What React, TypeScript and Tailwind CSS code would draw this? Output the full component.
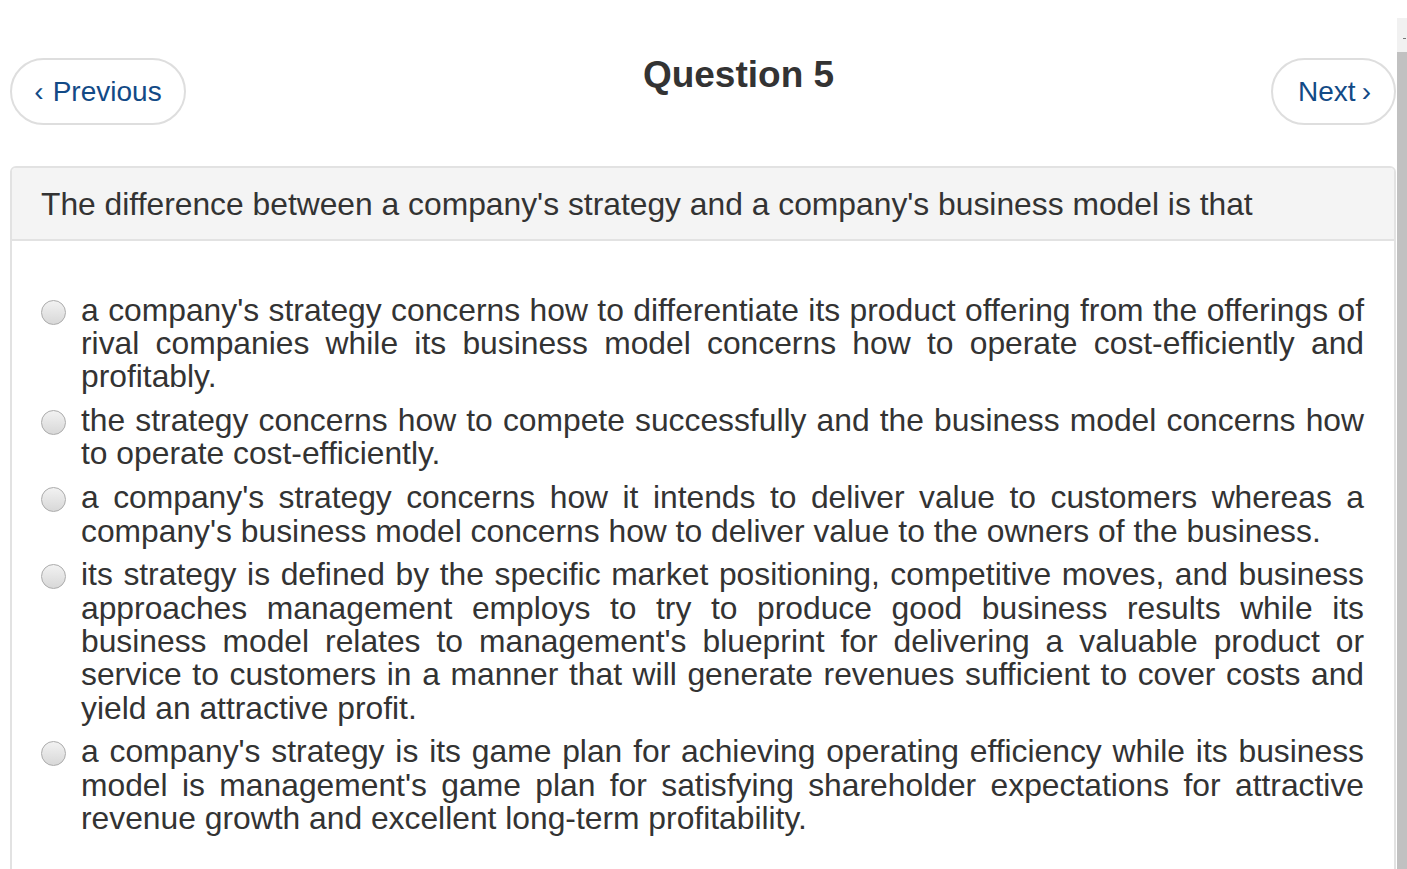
import React from 'react';

const options = [
  "a company's strategy concerns how to differentiate its product offering from the offerings of rival companies while its business model concerns how to operate cost-efficiently and profitably.",
  'the strategy concerns how to compete successfully and the business model concerns how to operate cost-efficiently.',
  "a company's strategy concerns how it intends to deliver value to customers whereas a company's business model concerns how to deliver value to the owners of the business.",
  "its strategy is defined by the specific market positioning, competitive moves, and business approaches management employs to try to produce good business results while its business model relates to management's blueprint for delivering a valuable product or service to customers in a manner that will generate revenues sufficient to cover costs and yield an attractive profit.",
  "a company's strategy is its game plan for achieving operating efficiency while its business model is management's game plan for satisfying shareholder expectations for attractive revenue growth and excellent long-term profitability.",
];

export default function App() {
  return (
    <div className="relative h-[869px] overflow-hidden bg-white font-['Liberation_Sans',Arial,sans-serif] text-[#333]">
      <div className="w-[1396px] pl-[10px] pt-[56px]">
        {/* nav row */}
        <div className="flex items-start">
          <button className="mt-[2px] flex h-[67px] w-[176px] items-center justify-center rounded-full border-2 border-[#dedede] bg-white text-[28px] text-[#124a86]">
            <span className="mr-[9px]">‹</span>Previous
          </button>
          <div className="flex-1 pl-[20px] text-center">
            <h1 className="text-[37px] font-bold leading-none">Question 5</h1>
          </div>
          <button className="mt-[2px] flex h-[67px] w-[125px] items-center justify-center rounded-full border-2 border-[#dedede] bg-white pl-[2px] text-[28px] text-[#124a86]">
            Next<span className="ml-[6px]">›</span>
          </button>
        </div>

        {/* question card */}
        <div className="mt-[41px] h-[800px] rounded-t-[6px] border-2 border-[#e2e2e2]">
          <div className="rounded-t-[4px] border-b-2 border-[#e2e2e2] bg-[#f4f4f4] py-[17.5px] pl-[29px] text-[31.8px] leading-[36px]">
            The difference between a company's strategy and a company's business model is that
          </div>
          <div className="flex flex-col gap-[10.5px] pl-[29px] pr-[30px] pt-[52.8px]">
            {options.map((o, i) => (
              <label key={i} className="flex items-start gap-[15px]">
                <span className="mt-[6px] h-[25px] w-[25px] shrink-0 rounded-full border border-[#ababab] bg-linear-to-b from-[#f2f2f2] to-[#d8d8d8]" />
                <span className="flex-1 text-justify text-[31.8px] leading-[33.3px]">{o}</span>
              </label>
            ))}
          </div>
        </div>
      </div>

      {/* window scrollbar */}
      <div className="absolute bottom-0 right-0 top-[18px] w-[10px] bg-[#f1f1f1]">
        <div className="absolute right-[1px] top-[20px] h-[1px] w-[3px] bg-[#777]" />
        <div className="absolute bottom-0 left-0 right-0 top-[34px] bg-[#c1c1c1]" />
      </div>
    </div>
  );
}
